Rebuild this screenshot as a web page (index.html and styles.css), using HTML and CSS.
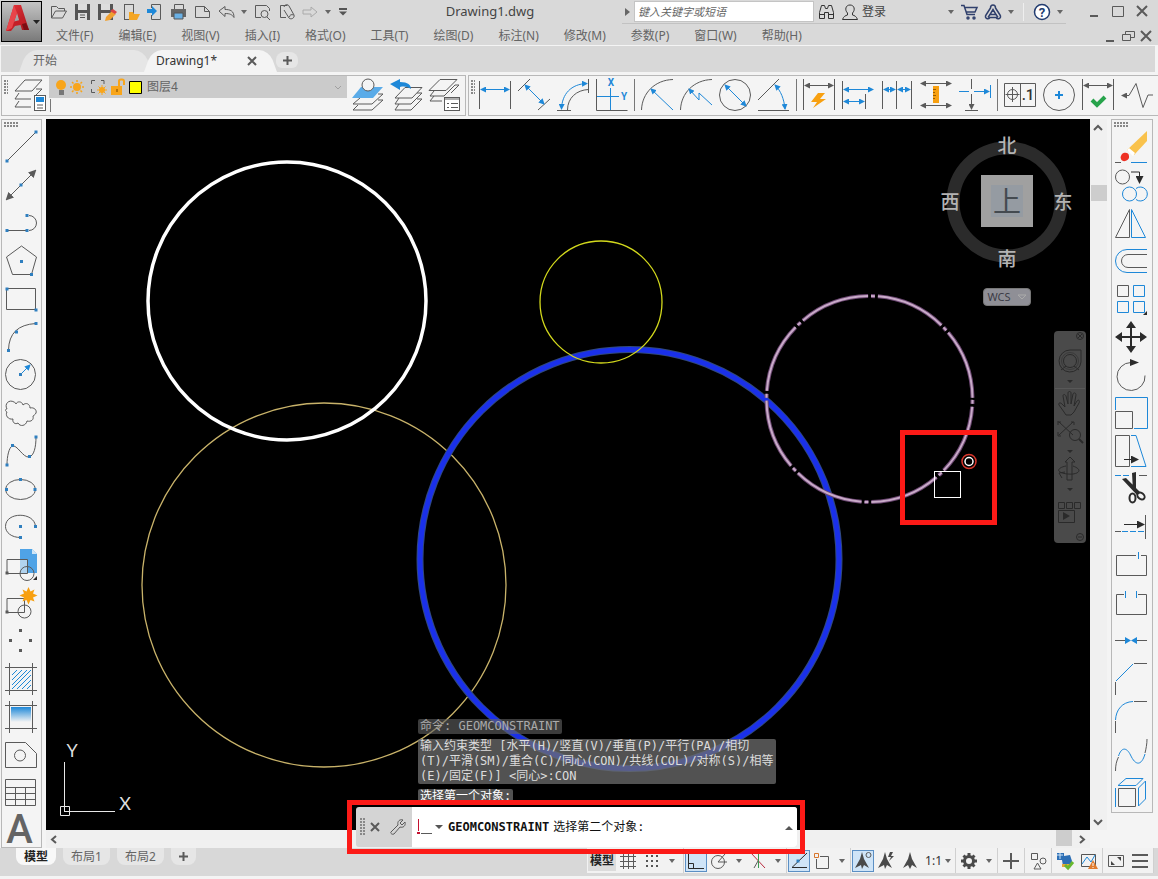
FILE: index.html
```html
<!DOCTYPE html>
<html lang="zh-CN">
	<head>
		<meta charset="utf-8">
		<title>Drawing1.dwg</title>
		<link rel="stylesheet" href="styles.css">
	</head>
	<body>
		<svg class="defs" aria-hidden="true">
			<defs>
				<marker id="ab" orient="auto-start-reverse" markerUnits="userSpaceOnUse" markerWidth="6" markerHeight="6" viewBox="0 0 6 6" refX="5" refY="3"><path d="M0 0l6 3-6 3z" fill="#1e88d8"/></marker>
				<marker id="ag" orient="auto-start-reverse" markerUnits="userSpaceOnUse" markerWidth="6" markerHeight="6" viewBox="0 0 6 6" refX="5" refY="3"><path d="M0 0l6 3-6 3z" fill="#5a5a5a"/></marker>
				<marker id="ak" orient="auto-start-reverse" markerUnits="userSpaceOnUse" markerWidth="8" markerHeight="8" viewBox="0 0 8 8" refX="6" refY="4"><path d="M0 0l8 4-8 4z" fill="#2b2b2b"/></marker>
				<marker id="al" orient="auto-start-reverse" markerUnits="userSpaceOnUse" markerWidth="8" markerHeight="8" viewBox="0 0 8 8" refX="6" refY="4"><path d="M0 0l8 4-8 4z" fill="#5a5a5a"/></marker>
				<linearGradient id="fade" x2="0" y2="1"><stop stop-color="#1e88d8"/><stop offset="1" stop-color="#f4f4f4"/></linearGradient>
				<linearGradient id="red" x2="1" y2="1"><stop stop-color="#e8373c"/><stop offset="1" stop-color="#a5121a"/></linearGradient>
			</defs>
		</svg>

		<header class="header">
			<button class="app-button" aria-label="应用程序菜单">
				<svg width="39" height="39" viewBox="0 0 39 39">
					<path d="M12 3h7l8 25h-7l-5-17-5 15-6 3z" fill="url(#red)"/>
					<path d="M4 29l6-9 12-3 2 5-11 2-4 5z" fill="#c41f27"/>
					<path d="M12 3l3 8-5 15-6 3z" fill="#e8454a"/>
					<path d="M20 22l4-1 3 7h-5z" fill="#7c0d13"/>
					<path d="M31 18h7l-3.500 4z" fill="#222"/>
				</svg>
			</button>
			<div class="header-rows">
				<div class="title-row">
					<div class="quick">
						<button aria-label="打开"><svg viewBox="0 0 24 24"><path class="g" d="M5.500 18V6.500h5l2 2h6V11M5.500 18l4-7h11l-4 7z"/></svg></button>
						<button aria-label="保存"><svg viewBox="0 0 24 24"><path d="M5 4h15v16H5z" fill="#555"/><path d="M8 4h9v6H8zM8 13h9v7H8z" fill="#ddd"/><path d="M10 15h5M10 17.500h5" stroke="#555"/></svg></button>
						<button aria-label="另存为"><svg viewBox="0 0 24 24"><path d="M4 4h15v16H4z" fill="#555"/><path d="M7 4h9v6H7zM7 13h9v7H7z" fill="#ddd"/><path d="M12 17l6-6 4 3-6 6-5 1z" fill="#f0a030"/><path d="M16 11l3-2 4 3-2 2z" fill="#d44"/></svg></button>
						<button aria-label="从移动设备打开"><svg viewBox="0 0 24 24"><rect class="g" x="6.500" y="4.500" width="9" height="15"/><path d="M11 20v-8h4l1 2h6l-3 6z" fill="#f5a623"/></svg></button>
						<button aria-label="保存到移动设备"><svg viewBox="0 0 24 24"><path class="g" d="M9.500 8V4.500h9v15h-9V15"/><path d="M5 9h5V6l5 5-5 5v-3H5z" fill="#1e88d8"/></svg></button>
						<button aria-label="打印"><svg viewBox="0 0 24 24"><path class="g" d="M8.500 9V4.500h9V9"/><path d="M5 9h15v8H5z" fill="#666"/><path d="M8 13h9v6H8z" fill="#6ab0e4" stroke="#555"/></svg></button>
						<button aria-label="新建"><svg viewBox="0 0 24 24"><path class="g" d="M5.500 6.500h9l5 5v6h-14zM14.500 6.500v5h5"/></svg></button>
						<button aria-label="放弃"><svg viewBox="0 0 24 24"><path class="g" d="M5 11l6-4.500v3c5 0 9 1 9 8-2-3-4-4-9-4v3z"/></svg></button>
						<button class="drop" aria-label="放弃列表"></button>
						<button aria-label="打印预览"><svg viewBox="0 0 24 24"><path class="g" d="M11 17.500H5.500v-12h11l3 3V11"/><circle class="g" cx="14.500" cy="14" r="3.500"/><path class="g" d="M17 17l3 3"/></svg></button>
						<button aria-label="图纸集"><svg viewBox="0 0 24 24"><path class="g" d="M12 17.500H6.500v-12h7M10 7c1-3 4-3 5-1l5 9c1 3-3 5-5 3l-5-8M15.500 17c0-2 2-3 4-2"/></svg></button>
						<button aria-label="重做"><svg viewBox="0 0 24 24"><path class="faint" d="M19 12l-6-5v3H5v4h8v3z"/></svg></button>
						<button class="drop" aria-label="重做列表"></button>
						<button aria-label="自定义"><svg viewBox="0 0 24 24"><path d="M5 8h8v2H5zM5 11.500h8l-4 4z" fill="#555"/></svg></button>
					</div>
					<h1 class="title">Drawing1.dwg</h1>
					<div class="search">
						<button class="expand" aria-label="展开"></button>
						<input type="text" aria-label="搜索" placeholder="键入关键字或短语">
						<button aria-label="搜索"><svg viewBox="0 0 24 24"><path class="dark" d="M5.500 18.500v-6l2-7h3l1 3h2l1-3h3l2 7v6h-5v-6h-4v6zM5.500 14.500h5M14.500 14.500h5"/></svg></button>
						<button class="login"><svg viewBox="0 0 24 24"><path class="dark" d="M4.500 19.500c1-3 3-4 5-4.500v-2c-3-3-2-8 2.500-8s5.500 5 2.500 8v2c2 .5 4 1.500 5 4.500z"/></svg>登录</button>
					</div>
					<div class="account">
						<button class="drop" aria-label="账户"></button>
						<button aria-label="购物车"><svg viewBox="0 0 24 24"><path class="navy" d="M4 5.500h3l3 9h8M8 7.500h12l-2 4.500H9"/><circle class="navy" cx="11" cy="18" r="1"/><circle class="navy" cx="17" cy="18" r="1"/></svg></button>
						<button aria-label="App Store"><svg viewBox="0 0 24 24"><path class="navy" d="M9.500 8c0-4 5-4 5 0l4.500 7c2 3-2 5-4 2.500H9c-2 2.500-6 .5-4-2.500zM9 14.500h6l-3-5zM9 14.500l-2 3M15 14.500l2 3"/></svg></button>
						<button class="drop" aria-label="App Store 列表"></button>
						<span class="divider"></span>
						<button aria-label="帮助"><svg viewBox="0 0 24 24"><circle cx="12" cy="12" r="7.500" fill="#fff" stroke="#223c70" stroke-width="1.500"/><text class="help-mark" x="12" y="17">?</text></svg></button>
						<button class="drop" aria-label="帮助列表"></button>
					</div>
					<div class="window-buttons">
						<button aria-label="最小化"><svg viewBox="0 0 24 24"><path class="thick" d="M8 16h8"/></svg></button>
						<button aria-label="最大化"><svg viewBox="0 0 24 24"><path class="g" d="M6.500 6.500h11v10h-11z"/></svg></button>
						<button aria-label="关闭"><svg viewBox="0 0 24 24"><path class="thick" d="M7 6l10 10M17 6L7 16"/></svg></button>
					</div>
				</div>
				<nav class="menu-row">
					<a href="#file">文件(F)</a>
					<a href="#edit">编辑(E)</a>
					<a href="#view">视图(V)</a>
					<a href="#insert">插入(I)</a>
					<a href="#format">格式(O)</a>
					<a href="#tools">工具(T)</a>
					<a href="#draw">绘图(D)</a>
					<a href="#dimension">标注(N)</a>
					<a href="#modify">修改(M)</a>
					<a href="#parametric">参数(P)</a>
					<a href="#window">窗口(W)</a>
					<a href="#help">帮助(H)</a>
					<div class="doc-buttons">
						<button aria-label="最小化图形"><svg viewBox="0 0 18 18"><path class="thick" d="M5 14h8"/></svg></button>
						<button aria-label="还原图形"><svg viewBox="0 0 18 18"><path class="g" d="M6.500 7V4.500h9v6H12M3.500 7.500h8v6h-8z"/></svg></button>
						<button aria-label="关闭图形"><svg viewBox="0 0 18 18"><path class="thick" d="M4 4l10 10M14 4L4 14"/></svg></button>
					</div>
				</nav>
			</div>
		</header>

		<div class="file-tabs">
			<button class="file-tab">开始</button>
			<button class="file-tab active">Drawing1*<svg width="10" height="10" viewBox="0 0 10 10"><path class="thick" d="M1 1l8 8M9 1L1 9"/></svg></button>
			<button class="file-tab add" aria-label="新图形"><svg width="9" height="9" viewBox="0 0 9 9"><path class="thick" d="M0 4.500h9M4.500 0v9"/></svg></button>
		</div>

		<div class="toolbars">
			<div class="toolbar layers">
				<span class="grip"></span>
				<button aria-label="图层特性"><svg viewBox="0 0 39 40"><path class="g" d="M16 4h17l-10 11H6zM27 13h6l-7 7M10 17l-4 6h16M10 25l-4 6h16"/><rect x="25.500" y="19.500" width="11" height="15" fill="#fff" stroke="#5a5a5a"/><path d="M27 21h8v5h-8z" fill="#1e88d8"/><path class="g" d="M28 29h6M28 32h6"/></svg></button>
				<div class="layer-area">
					<div class="layer-combo">
						<svg width="88" height="20" viewBox="0 0 88 20">
							<circle cx="7" cy="8" r="5" fill="#f8a51b"/><path d="M5 13h5v5H5z" fill="#777"/>
							<circle cx="23" cy="10" r="4" fill="#f8a51b"/><path d="M23 3v2M23 15v2M16 10h2M28 10h2M18 5l1.500 1.500M26.500 13.500L28 15M28 5l-1.500 1.500M19.500 13.500L18 15" stroke="#f8a51b" stroke-width="1.500"/>
							<path class="g" d="M41 3.500h-3.500V7M47 3.500h3V7M37.500 12v3.500H41"/><circle cx="48" cy="13" r="3" fill="#f8a51b"/><path d="M48 8v10M43 13h10M44.500 9.500l7 7M51.500 9.500l-7 7" stroke="#f8a51b"/>
							<path d="M57 9h11v9H57z" fill="#f8a51b"/><path d="M65 9V4q0-1.500 2-1.500h1q2 0 2 2V8" fill="none" stroke="#f8a51b" stroke-width="2"/><path d="M62 12h2v3h-2z" fill="#b87408"/>
							<path d="M75.500 4.500h12v12h-12z" fill="#ff0" stroke="#000"/>
						</svg>
						<select aria-label="图层"><option>图层4</option></select>
					</div>
				</div>
				<button aria-label="置为当前"><svg viewBox="0 0 39 40"><path class="g" d="M12 22l-7 6h19l11-10h-5M10 29l-5 5h19l11-10h-5"/><path d="M13 11h22L25 22H4z" fill="#5aabe8"/><circle cx="20" cy="9" r="6" fill="#f4f4f4" stroke="#5a5a5a"/></svg></button>
				<button aria-label="上一个图层"><svg viewBox="0 0 39 40"><path class="g" d="M18 11.500h17L25 22H8zM12 22l-4 6h16l11-11h-5M12 28l-4 6h16l11-11h-5"/><path d="M3 8l10-5v3c8 0 11 3 11 7-3-2-6-3-11-2v3z" fill="#1e88d8"/></svg></button>
				<button aria-label="图层状态管理器"><svg viewBox="0 0 39 40"><path class="g" d="M14 3.500h17L20 14.500H3zM8 15l-4 5h14l11-11h4l-8 8M8 20l-4 5h12"/><rect x="18.500" y="21.500" width="15" height="13" fill="#fff" stroke="#5a5a5a"/><path class="g" d="M18 23h16M25 27.500h7M25 31.500h7M21 27.500h2M21 31.500h2"/></svg></button>
			</div>
			<div class="toolbar dimension">
				<span class="grip"></span>
				<button aria-label="线性"><svg viewBox="0 0 39 40"><path class="g" d="M4.500 5v28M35.500 5v28"/><path class="b ends-b" d="M6 13.500h28"/></svg></button>
				<button aria-label="对齐"><svg viewBox="0 0 39 40"><path class="g" d="M4 15L16 3M24 34l12-11"/><path class="b ends-b" d="M11 9l19 19"/></svg></button>
				<button aria-label="弧长"><svg viewBox="0 0 39 40"><path class="g" d="M4 34.500h14M35.500 3v14M14.500 34c0-12 9-20 21-20.500"/><path class="b ends-b" d="M8.500 33C9 18 18 8 34 7.500"/></svg></button>
				<button aria-label="坐标"><svg viewBox="0 0 39 40"><path class="g" d="M4.500 3v31.500h31"/><path class="b" d="M18.500 12v22M5 20.500h22"/><text class="axis" x="19" y="10">X</text><text class="axis" x="32" y="24">Y</text></svg></button>
				<span class="separator"></span>
				<button aria-label="半径"><svg viewBox="0 0 39 40"><path class="g" d="M4.500 34C5 17 18 4 36 3.500"/><path class="b start-b" d="M14 13l22 21"/></svg></button>
				<button aria-label="折弯"><svg viewBox="0 0 39 40"><path class="g" d="M4.500 34C5 17 18 4 36 3.500"/><path class="b start-b" d="M13 13l10 11V17l13 12"/></svg></button>
				<button aria-label="直径"><svg viewBox="0 0 39 40"><circle class="g" cx="20" cy="19" r="15.500"/><path class="b ends-b" d="M10 9l21 21"/></svg></button>
				<button aria-label="角度"><svg viewBox="0 0 39 40"><path class="g" d="M4 24L25 3M4 34.500h31"/><path class="b ends-b" d="M21 9c6 6 9 14 10 24"/></svg></button>
				<span class="separator"></span>
				<button aria-label="快速标注"><svg viewBox="0 0 39 40"><path class="g" d="M4.500 3v31M35.500 3v31"/><path class="g ends-g" d="M6 9.500h28"/><path d="M19 17l-7 9h6l-4 6 13-9h-6l5-6z" fill="#f8a010"/></svg></button>
				<button aria-label="基线"><svg viewBox="0 0 39 40"><path class="g" d="M4.500 5v28M27.500 18v15"/><path class="b ends-b" d="M6 13.500h29"/><path class="b ends-b" d="M6 25.500h20"/></svg></button>
				<button aria-label="连续"><svg viewBox="0 0 39 40"><path class="g" d="M5.500 5v28M19.500 5v28M34.500 5v28"/><path class="b ends-b" d="M7 13.500h11"/><path class="b ends-b" d="M21 13.500h12"/></svg></button>
				<button aria-label="标注间距"><svg viewBox="0 0 39 40"><path class="g ends-g" d="M5 7.500h30"/><path class="g ends-g" d="M5 29.500h30"/><path d="M17 10h6v17h-6z" fill="#f8a010"/><path d="M17 13.500h3M17 16.500h2M17 19.500h3M17 22.500h2" stroke="#9a5d00"/></svg></button>
				<button aria-label="标注打断"><svg viewBox="0 0 39 40"><path class="g" d="M16.500 3v10M10 34.500h13"/><path class="g end-g" d="M16.500 18v15"/><path class="b" d="M4 15.500h10M35.500 9v13"/><path class="b end-b" d="M19 15.500h15"/></svg></button>
				<span class="separator"></span>
				<button aria-label="公差"><svg viewBox="0 0 39 40"><path class="g" d="M4.500 7.500h31v23h-31zM20.500 7.500v23M12.500 11v15M5.500 18.500h14"/><circle class="g" cx="12.500" cy="18.500" r="5"/><text class="tol" x="28" y="24">.1</text></svg></button>
				<button aria-label="圆心标记"><svg viewBox="0 0 39 40"><circle class="g" cx="20" cy="19" r="15.500"/><path d="M20 15v8M16 19h8" stroke="#1e88d8" stroke-width="2"/></svg></button>
				<button aria-label="检验"><svg viewBox="0 0 39 40"><path class="g" d="M4.500 3v31M35.500 3v31"/><path class="g ends-g" d="M6 9.500h28"/><path d="M14 24l5 5 8-8" fill="none" stroke="#27a34b" stroke-width="4"/></svg></button>
				<button aria-label="折弯线性"><svg viewBox="0 0 39 40"><path class="g start-g" d="M5 19.500h7l7-12 7 24 5-12.500h5"/></svg></button>
			</div>
		</div>

		<main class="workspace">
			<div class="toolbar side draw">
				<span class="grip"></span>
				<button aria-label="直线"><svg viewBox="0 0 38 38"><path class="g" d="M4 33L33 4"/><path class="dot" d="M4 33h0M33 4h0"/></svg></button>
				<button aria-label="构造线"><svg viewBox="0 0 38 38"><path class="g ends-l" d="M4 33L32 5"/><path class="dot" d="M18 19h0"/></svg></button>
				<button aria-label="多段线"><svg viewBox="0 0 38 38"><path class="g" d="M4 26.500h20M26 11.500a7.500 7.500 0 0 1 0 15"/><path class="dot" d="M4 26.500h0M24 26.500h0M24 11.500h0"/></svg></button>
				<button aria-label="多边形"><svg viewBox="0 0 38 38"><path class="g" d="M18.500 4l15 11-5 17.500h-19L3.500 15z"/><path class="dot" d="M18.500 19.500h0M28.500 32.500h0"/></svg></button>
				<button aria-label="矩形"><svg viewBox="0 0 38 38"><path class="g" d="M3.500 8.500h29v21h-29z"/><path class="dot" d="M4 9h0M33 30h0"/></svg></button>
				<button aria-label="圆弧"><svg viewBox="0 0 38 38"><path class="g" d="M5.500 32Q6 7 33 5.500"/><path class="dot" d="M5.500 32.500h0M13.500 14h0M33 5.500h0"/></svg></button>
				<button aria-label="圆"><svg viewBox="0 0 38 38"><circle class="g" cx="17.500" cy="18.500" r="15"/><path class="b end-b" d="M17.500 18.500L27 9"/><path class="dot" d="M17.500 18.500h0"/></svg></button>
				<button aria-label="修订云线"><svg viewBox="0 0 38 38"><path class="g" d="M4 15c-3-5 2-10 7-7 1 0 1 1 2 2 1-3 6-3 7 1 3-3 7-1 7 3 4-1 7 2 6 5-1 2-2 2-3 3 1 4-2 6-6 5-1 5-7 6-9 2-3 2-6-1-5-4-5 1-8-4-6-7-2-1-2-3 0-3z"/></svg></button>
				<button aria-label="样条曲线"><svg viewBox="0 0 38 38"><path class="g" d="M4 33c0-9 2-17 5-19 5-2 11 12 17 11 5-1 7-10 7-20"/><path class="dot" d="M4 33h0M9.500 13.500h0M26.500 24.500h0M33 5h0"/></svg></button>
				<button aria-label="椭圆"><svg viewBox="0 0 38 38"><ellipse class="g" cx="17.500" cy="19.500" rx="15" ry="10"/><path class="dot" d="M17.500 9.500h0M3.500 19.500h0M32 19.500h0"/></svg></button>
				<button aria-label="椭圆弧"><svg viewBox="0 0 38 38"><path class="g" d="M32.500 18.500c-1-15-30-15-30 0 0 6 6 11 15 11"/><path class="dot" d="M32.500 18.500h0M17.500 18.500h0M17.500 29.500h0"/></svg></button>
				<button aria-label="插入块"><svg viewBox="0 0 38 38"><path d="M17 3h12l5 5v19H17z" fill="#4fa3e6"/><path d="M29 3v5h5z" fill="#cfe5f7"/><path d="M4 13.500h20.500v14H4z" fill="#f4f4f4" fill-opacity=".6" stroke="#5a5a5a"/><circle class="g" cx="24" cy="27.500" r="7"/><path class="corner" d="M34 30v4h-4z"/><path class="dot gray" d="M4 27h0"/></svg></button>
				<button aria-label="创建块"><svg viewBox="0 0 38 38"><path class="g" d="M4 14.500h17.500v14H4z"/><circle class="g" cx="21.500" cy="27.500" r="6.500"/><path d="M25.500 3l2 4.500 4-2-1.500 4 4.500 2-4.500 2 1.500 4-4-1.500-2 4.500-2-4.500-4 1.500 1.500-4-4.500-2 4.500-2-1.500-4 4 2z" fill="#f8a010"/><path class="dot gray" d="M4 28h0"/></svg></button>
				<button aria-label="点"><svg viewBox="0 0 38 38"><path class="dot gray" d="M17.500 8.500h0M7.500 18.500h0M27.500 18.500h0M17.500 28.500h0"/></svg></button>
				<button aria-label="图案填充"><svg viewBox="0 0 38 38"><path class="g" d="M6.500 3v32M29.500 3v32M2 7.500h32M2 30.500h32"/><path class="b" d="M9 15l5-5M9 20l10-10M9 25l15-15M9 29l19-19M14 29l14-14M19 29l9-9M24 29l4-4"/></svg></button>
				<button aria-label="渐变色"><svg viewBox="0 0 38 38"><path class="g" d="M6.500 3v32M29.500 3v32M2 7.500h32M2 30.500h32"/><path d="M8 9h20v15H8z" fill="url(#fade)"/></svg></button>
				<button aria-label="面域"><svg viewBox="0 0 38 38"><path class="g" d="M2.500 6.500h20l11 11v14h-31z"/><circle class="g" cx="17" cy="19.500" r="5.500"/></svg></button>
				<button aria-label="表格"><svg viewBox="0 0 38 38"><path class="g" d="M2.500 5.500h30v26h-30zM2.500 13.500h30M2.500 19.500h30M2.500 25.500h30M12.500 13.500v18M22.500 13.500v18"/></svg></button>
				<button class="text-tool" aria-label="多行文字">A</button>
			</div>

			<div class="view">
				<div class="canvas">
					<svg class="drawing" width="1044" height="711" viewBox="0 0 1044 711">
						<circle cx="278" cy="466" r="182" fill="none" stroke="#c9b36a" stroke-width="1.300"/>
						<circle cx="583.500" cy="440" r="209.500" fill="none" stroke="#31497e" stroke-width="7"/>
						<circle cx="583.500" cy="440" r="209.500" fill="none" stroke="#1a30ea" stroke-width="5"/>
						<circle cx="555" cy="183" r="61" fill="none" stroke="#d2d81c" stroke-width="1.300"/>
						<circle cx="241" cy="182" r="139" fill="none" stroke="#fff" stroke-width="3.500"/>
						<circle class="phantom wide" cx="823.500" cy="280" r="103"/>
						<circle class="phantom" cx="823.500" cy="280" r="103"/>
						<rect x="856.500" y="313.500" width="92" height="90" fill="none" stroke="#fc1a17" stroke-width="5"/>
						<rect x="888.500" y="352.500" width="26" height="26" fill="none" stroke="#fff"/>
						<circle cx="923" cy="342.500" r="7" fill="none" stroke="#d8362c" stroke-width="1.500"/>
						<circle cx="923" cy="342.500" r="4" fill="none" stroke="#fff" stroke-width="1.500"/>
					</svg>
					<svg class="ucs" width="80" height="80" viewBox="0 0 80 80">
						<path d="M8.500 22v49.500M8 71.500h51M4.500 66.500h9v9h-9z" fill="none" stroke="#e8e8e8"/>
						<text x="16" y="17">Y</text>
						<text x="69" y="70">X</text>
					</svg>
					<div class="viewcube">
						<svg width="140" height="140" viewBox="0 0 140 140">
							<circle cx="70" cy="68" r="54" fill="none" stroke="#2b2b2b" stroke-width="13"/>
							<path d="M44 41h52v52H44z" fill="#a0a0a0"/>
							<path d="M54 51h32v32H54z" fill="#959ba2"/>
							<text class="cube-face" x="70" y="78">上</text>
							<text x="70" y="19">北</text>
							<text x="70" y="132">南</text>
							<text x="13" y="75">西</text>
							<text x="126" y="75">东</text>
						</svg>
						<button class="wcs">WCS<svg width="10" height="6" viewBox="0 0 10 6"><path d="M1 1h8L5 5z" fill="none" stroke="#aaa"/></svg></button>
					</div>
					<div class="navbar">
						<svg width="32" height="212" viewBox="0 0 32 212">
							<g fill="none" stroke="#2a2a2a">
								<circle cx="26" cy="5" r="3.500"/><path d="M24 3l4 4M28 3l-4 4"/>
								<path d="M16 19h11v12a11 11 0 1 1-11-12zM7 39l5-4M25 39l-5-4"/><circle cx="16" cy="30" r="6.500"/><circle cx="16" cy="30" r="8.500" stroke-width=".5"/>
								<path d="M10 81l-5-7c-1-2 1-3 3-1l3 3-2-11c0-2 2-2 3 0l2 8V62c0-2 3-2 3 0v11l2-10c1-2 3-1 3 1l-2 11 3-5c2-2 3 0 2 2l-5 9-3 3h-5z"/>
								<path d="M5 91l14 13M19 91L5 104M4 91h3M4 94v-4M17 91h3v3M4 101v4h3"/><circle cx="21" cy="104" r="5.500"/><path d="M25 108l4 4" stroke-width="2"/>
								<path d="M13 131v18h5v-18h3l-5-5-5 5z"/><path d="M12 135c-10 2-10 7 2 8 10 1 16-4 5-8M8 147l-3-5 6-1"/>
								<path d="M4.500 171.500h6v6h-6zM12.500 171.500h6v6h-6zM20.500 171.500h6v6h-6zM4.500 179.500h16v12h-16z"/>
								<circle cx="26" cy="206" r="3.500"/><path d="M24 206h4"/>
							</g>
							<path d="M13 49h6l-3 3zM13 119h6l-3 3zM13 157h6l-3 3zM9 181l7 4-7 4z" fill="#2a2a2a"/>
							<path d="M1 57.500h30" stroke="#585858"/>
						</svg>
					</div>
					<div class="command">
						<div class="history">
							<p class="old">命令: GEOMCONSTRAINT</p>
							<p>输入约束类型 [水平(H)/竖直(V)/垂直(P)/平行(PA)/相切<br>(T)/平滑(SM)/重合(C)/同心(CON)/共线(COL)/对称(S)/相等<br>(E)/固定(F)] &lt;同心&gt;:CON</p>
							<p class="last">选择第一个对象:</p>
						</div>
						<div class="highlight">
							<div class="command-line">
								<span class="grip"></span>
								<button aria-label="关闭命令行"><svg width="12" height="12" viewBox="0 0 12 12"><path class="thick" d="M2 2l8 8M10 2l-8 8"/></svg></button>
								<button aria-label="自定义命令行"><svg width="18" height="18" viewBox="0 0 18 18"><path class="g" d="M2 14l7-7c-1-4 2-6 5-5l-3 3 2 2 3-3c1 4-2 6-5 5l-6 7c-2 1-4-1-3-2z"/></svg></button>
								<div class="prompt">
									<svg width="26" height="18" viewBox="0 0 26 18"><path d="M1.500 1v12" stroke="#c41230"/><path d="M0 14h3v2H0z" fill="#c41230"/><path class="g" d="M4 15.500h11"/><path d="M18 7h8l-4 4z" fill="#555"/></svg>
									<label for="cmd"><b>GEOMCONSTRAINT</b>选择第二个对象:</label>
									<input id="cmd" type="text">
									<button aria-label="命令历史"><svg width="8" height="5" viewBox="0 0 8 5"><path d="M0 5l4-4 4 4z" fill="#555"/></svg></button>
								</div>
							</div>
						</div>
					</div>
				</div>
				<div class="scroll vertical">
					<button aria-label="向上"><svg width="16" height="16" viewBox="0 0 16 16"><path class="thick" d="M4 10l4-4 4 4"/></svg></button>
					<span class="thumb"></span>
					<button aria-label="向下"><svg width="16" height="16" viewBox="0 0 16 16"><path class="thick" d="M4 6l4 4 4-4"/></svg></button>
				</div>
				<div class="scroll horizontal">
					<button aria-label="向左"><svg width="16" height="16" viewBox="0 0 16 16"><path class="thick" d="M10 5L6 8.500l4 3.500"/></svg></button>
					<span class="thumb"></span>
					<button aria-label="向右"><svg width="16" height="16" viewBox="0 0 16 16"><path class="thick" d="M6 5l4 3.500L6 12"/></svg></button>
				</div>
			</div>

			<div class="toolbar side modify">
				<span class="grip"></span>
				<button aria-label="删除"><svg viewBox="0 0 40 38"><path d="M35 3v10L22 27l-7-5z" fill="#f9c24c"/><path d="M15 22l2-2 6 5-2 3z" fill="#fff"/><path d="M10 26c2-2 7-2 7 2 1 5-7 7-8 3-1-2 0-3 1-5z" fill="#ee3124"/><path class="g" d="M3 34.500h6"/><path class="b" d="M19 34.500h16"/></svg></button>
				<button aria-label="复制"><svg viewBox="0 0 40 38"><circle class="g" cx="10.500" cy="11" r="7"/><path class="k end-k" d="M19 6h8.500v10"/><circle class="b" cx="17.500" cy="28" r="7"/><path class="b" d="M24 22.500a7 7 0 1 1 0 11"/></svg></button>
				<button aria-label="镜像"><svg viewBox="0 0 40 38"><path class="g" d="M17.500 5.500v28h-14z"/><path class="b" d="M19.500 5.500v28h14z"/></svg></button>
				<button aria-label="偏移"><svg viewBox="0 0 40 38"><path class="b" d="M35 7.500H15a11.500 11.500 0 0 0 0 23h20"/><path class="g" d="M35 12.500H16a6.500 6.500 0 0 0 0 13h19"/></svg></button>
				<button aria-label="阵列"><svg viewBox="0 0 40 38"><path class="g" d="M5.500 5.500h11v11h-11z"/><path class="b" d="M21.500 5.500h11v11h-11zM5.500 21.500h11v11h-11zM21.500 21.500h11v11h-11z"/><path class="corner" d="M35 31v4h-4z"/></svg></button>
				<button aria-label="移动"><svg viewBox="0 0 40 38"><path d="M19 3l5 7h-4v8h8v-4l7 5-7 5v-4h-8v8h4l-5 7-5-7h4v-8h-8v4l-7-5 7-5v4h8v-8h-4z" fill="#2b2b2b"/></svg></button>
				<button aria-label="旋转"><svg viewBox="0 0 40 38"><path class="g" d="M33 19.500a14 14 0 1 1-14-13"/><path d="M18 3l9 3.500-9 3.500z" fill="#2b2b2b"/></svg></button>
				<button aria-label="缩放"><svg viewBox="0 0 40 38"><path class="b" d="M3.500 16V3.500h32v31H22"/><path class="g" d="M3.500 17.500h17v17h-17z"/></svg></button>
				<button aria-label="拉伸"><svg viewBox="0 0 40 38"><path class="g" d="M3.500 3.500h14v31h-14z"/><path class="b" d="M19 3.500h5l10 31H19"/><path class="k end-k" d="M12 27.500h13"/></svg></button>
				<button aria-label="修剪"><svg viewBox="0 0 40 38"><path class="b dash" d="M3 5.500h16"/><path class="g" d="M27 5.500h8"/><path d="M20 3l4-1v17l-3 2zM10 9l4-1 14 14-3 3z" fill="#2b2b2b"/><ellipse class="ring" cx="20.500" cy="28" rx="3" ry="4.500"/><ellipse class="ring" cx="29" cy="26" rx="4" ry="3" transform="rotate(40 29 26)"/></svg></button>
				<button aria-label="延伸"><svg viewBox="0 0 40 38"><path class="k end-k" d="M12 16.500h19"/><path class="g" d="M33.500 7v24M3 23.500h6"/><path class="b dash" d="M10 23.500h22"/></svg></button>
				<button aria-label="打断于点"><svg viewBox="0 0 40 38"><path class="g" d="M24 9.500H4.500v20h30v-20H29"/><path class="b" d="M26.500 6v7"/></svg></button>
				<button aria-label="打断"><svg viewBox="0 0 40 38"><path class="g" d="M12 10.500H4.500v20h30v-20H26"/><path class="b" d="M13.500 7v7M24.500 7v7"/></svg></button>
				<button aria-label="合并"><svg viewBox="0 0 40 38"><path class="g" d="M3 18.500h10M25 18.500h10"/><path d="M13 15l6 3.500-6 3.500zM25 15l-6 3.500 6 3.500z" fill="#1e88d8"/></svg></button>
				<button aria-label="倒角"><svg viewBox="0 0 40 38"><path class="b" d="M4 21L21 4"/><path class="g" d="M22 3.500h13M3.500 22v13"/></svg></button>
				<button aria-label="圆角"><svg viewBox="0 0 40 38"><path class="b" d="M3.500 22C4 12 10 4 21 3.500"/><path class="g" d="M22 3.500h13M3.500 23v12"/></svg></button>
				<button aria-label="光顺曲线"><svg viewBox="0 0 40 38"><path class="g" d="M3.500 35c0-6 1-10 3-14M33 17c1-4 2-9 2-14"/><path class="b" d="M6.500 20c3-9 8-9 12-1 5 11 11 11 14.500-1"/></svg></button>
				<button aria-label="分解"><svg viewBox="0 0 40 38"><path class="g" d="M6.500 14.500h17v18h-17z"/><path class="b" d="M3.500 14v19M6 11.500l8-7h17l-7 7zM26.500 14l7-7v18l-7 7z"/></svg></button>
			</div>
		</main>

		<footer class="status">
			<div class="layout-tabs">
				<button class="layout-tab active">模型</button>
				<button class="layout-tab">布局1</button>
				<button class="layout-tab">布局2</button>
				<button class="layout-tab" aria-label="新建布局"><svg width="9" height="9" viewBox="0 0 9 9"><path class="thick" d="M0 4.500h9M4.500 0v9"/></svg></button>
			</div>
			<div class="status-tools">
				<div class="group snap">
					<button class="model">模型</button>
					<button aria-label="栅格"><svg viewBox="0 0 24 24"><path class="g" d="M4 7.500h16M4 12.500h16M4 17.500h16M7.500 4v16M12.500 4v16M17.500 4v16"/></svg></button>
					<button aria-label="捕捉"><svg viewBox="0 0 24 24"><path d="M6 7h14M6 12h14M6 17h14" stroke="#555" stroke-width="2" stroke-dasharray="2 3"/></svg></button>
					<button class="drop" aria-label="捕捉设置"></button>
				</div>
				<div class="group">
					<button class="on" aria-label="正交"><svg viewBox="0 0 24 24"><path class="k" d="M4.500 4v15.500H20M4.500 14.500h5v5"/></svg></button>
					<button aria-label="极轴"><svg viewBox="0 0 24 24"><circle class="g" cx="11" cy="13" r="6.500"/><path class="g" d="M20 13h-9l7-8"/></svg></button>
					<button class="drop" aria-label="极轴设置"></button>
					<button aria-label="等轴测草图"><svg viewBox="0 0 24 24"><path d="M5 4l14 15" stroke="#b8283c"/><path d="M12.500 5v14" stroke="#3a9a50"/><path class="g" d="M8 19l4-7"/></svg></button>
					<button class="drop" aria-label="等轴测设置"></button>
				</div>
				<div class="group">
					<button class="on" aria-label="对象捕捉追踪"><svg viewBox="0 0 24 24"><path class="k" d="M20 4L5 18.500h15"/><path class="dot" d="M11 12h0"/></svg></button>
					<button aria-label="对象捕捉"><svg viewBox="0 0 24 24"><path class="g" d="M10 7.500h8.500v12h-12V10"/><path d="M4.500 4.500h4v4h-4z" fill="none" stroke="#d8762c"/></svg></button>
					<button class="drop" aria-label="对象捕捉设置"></button>
				</div>
				<div class="group">
					<button class="on" aria-label="注释可见性"><svg viewBox="0 0 24 24"><path class="person" d="M11 3l2 7 5 9-5-3-2 4-1-4-6 3 5-9z"/><circle class="g" cx="17.500" cy="6" r="2.500"/></svg></button>
					<button aria-label="自动缩放"><svg viewBox="0 0 24 24"><path class="person" d="M11 3l2 7 5 9-5-3-2 4-1-4-6 3 5-9zM16 3l-2 5h3l-2 4 5-5h-3l2-4z"/></svg></button>
					<button aria-label="注释比例"><svg viewBox="0 0 24 24"><path class="person" d="M12 3l2 7 5 9-5-3-2 4-2-4-5 3 5-9z"/></svg></button>
					<button class="scale">1:1<span class="caret"></span></button>
				</div>
				<div class="group">
					<button aria-label="切换工作空间"><svg viewBox="0 0 24 24"><circle cx="12" cy="12" r="4.500" fill="none" stroke="#4a4a4a" stroke-width="3"/><path d="M12 4v4M12 16v4M4 12h4M16 12h4M6.500 6.500L9 9M15 15l2.500 2.500M17.500 6.500L15 9M9 15l-2.500 2.500" stroke="#4a4a4a" stroke-width="3"/></svg></button>
					<button class="drop" aria-label="工作空间列表"></button>
				</div>
				<div class="group">
					<button aria-label="注释监视器"><svg viewBox="0 0 24 24"><path class="thick" d="M4 12h16M12 4v16"/></svg></button>
				</div>
				<div class="group">
					<button aria-label="隔离对象"><svg viewBox="0 0 24 24"><path class="g" d="M5.500 4.500h6v6h-6zM11.500 14l3.500 6H8z"/><circle class="g" cx="17" cy="12" r="3"/></svg></button>
				</div>
				<div class="group">
					<button aria-label="图形性能"><svg viewBox="0 0 24 24"><path d="M4 4h7v3l6-1 2 6-2 7-7-2-1-6H4z" fill="#2d6fb5"/><path d="M4 6h6M7 4v6" stroke="#cfe5f7"/><path d="M9 15h8v3H9z" fill="#e5a83c"/><path d="M12 16l3 3 5-6" fill="none" stroke="#69b82e" stroke-width="3"/></svg></button>
					<button aria-label="清理屏幕"><svg viewBox="0 0 24 24"><path d="M4.500 5.500h14v12h-14z" fill="none" stroke="#555"/><path d="M5 15l5-7 4 5 4-7" fill="none" stroke="#1e88d8"/><path d="M16 11l5 9H11z" fill="#e07b2e"/><path d="M16 14v3M16 18v1" stroke="#fff"/></svg></button>
				</div>
				<div class="group">
					<button aria-label="全屏显示"><svg viewBox="0 0 24 24"><path class="g" d="M4.500 6.500h15v11h-15z"/><path d="M17 8v4l-4-4zM7 16v-4l4 4z" fill="#444"/></svg></button>
					<button aria-label="自定义"><svg viewBox="0 0 24 24"><path class="thick" d="M4 6h16M4 12h16M4 18h16"/></svg></button>
				</div>
			</div>
		</footer>
	</body>
</html>
```

FILE: styles.css
```css
* {
	box-sizing: border-box;
}
body {
	margin: 0;
	min-width: 1158px;
	min-height: 100vh;
	display: flex;
	flex-direction: column;
	background: #f4f4f4;
	color: #646464;
	font-family: "Noto Sans", "Noto Sans CJK SC", sans-serif;
	font-size: 12px;
	line-height: 16px;
	overflow-x: hidden;
}
button {
	display: flex;
	align-items: center;
	justify-content: center;
	flex: none;
	margin: 0;
	padding: 0;
	border: 0;
	background: transparent;
	color: inherit;
	font: inherit;
	cursor: pointer;
}
input,
select {
	font: inherit;
	color: inherit;
	border: 0;
	outline: 0;
}
svg {
	display: block;
	flex: none;
}
.defs {
	position: absolute;
	width: 0;
	height: 0;
}

/* icon strokes */
.g, .b, .k, .dark, .navy, .faint, .thick, .ring {
	fill: none;
	stroke: #5a5a5a;
}
.b { stroke: #1e88d8; }
.k { stroke: #2b2b2b; }
.dark { stroke: #333; }
.navy { stroke: #30406c; stroke-width: 1.5; }
.faint { stroke: #aaa; }
.thick { stroke-width: 2; }
.ring { stroke: #2b2b2b; stroke-width: 2; }
.dash { stroke-dasharray: 6 2; }
.dot {
	stroke: #2f7fbf;
	stroke-width: 3;
	stroke-linecap: square;
}
.dot.gray { stroke: #5a5a5a; }
.corner { fill: #2b2b2b; }
.person { fill: #4a4a4a; }
.ends-b { marker-start: url(#ab); marker-end: url(#ab); }
.start-b { marker-start: url(#ab); }
.end-b { marker-end: url(#ab); }
.ends-g { marker-start: url(#ag); marker-end: url(#ag); }
.start-g { marker-start: url(#ag); }
.end-g { marker-end: url(#ag); }
.ends-l { marker-start: url(#al); marker-end: url(#al); }
.end-k { marker-end: url(#ak); }
.axis, .tol, .help-mark {
	text-anchor: middle;
	font-family: Roboto, sans-serif;
	font-weight: 700;
	font-size: 10px;
	fill: #1e88d8;
}
.tol { font-size: 15px; font-weight: 500; fill: #333; }
.help-mark { font-size: 13px; fill: #223c70; }

/* title and menu */
.header {
	display: flex;
	height: 45px;
	background: #d9d9d9;
}
.app-button {
	width: 41px;
	height: 41px;
	margin: 1px 4px 0 1px;
	border: 1px solid #000;
	background: linear-gradient(#c4c4c4, #7a7a7a);
}
.header-rows {
	flex: 1;
}
.title-row {
	display: flex;
	height: 24px;
}
.title-row button svg {
	width: 24px;
	height: 24px;
}
.quick,
.search,
.account,
.window-buttons {
	display: flex;
	align-items: center;
}
.drop {
	width: 12px;
	height: 24px;
}
.drop::before,
.caret {
	content: "";
	border: 3px solid transparent;
	border-top: 4px solid #666;
	border-bottom: 0;
}
.title {
	flex: 1;
	margin: 0;
	text-align: center;
	font-size: 12px;
	font-weight: 400;
	font-size: 13px;
	line-height: 22px;
	color: #444;
}
.search,
.account {
	border-bottom: 1px solid #c2c2c2;
}
.search .expand {
	width: 12px;
	height: 20px;
}
.expand::before {
	content: "";
	border: 4px solid transparent;
	border-left: 5px solid #666;
	border-right: 0;
}
.search input {
	width: 180px;
	height: 21px;
	padding: 0 3px;
	border: 1px solid #c4c4c4;
	background: #fff;
}
.search input::placeholder {
	color: #666;
	font-style: italic;
	font-size: 11px;
}
.login {
	padding-right: 59px;
	color: #444;
}
.divider {
	width: 1px;
	height: 18px;
	margin: 0 6px;
	background: #eee;
}
.window-buttons {
	padding: 0 4px 0 16px;
}
.menu-row {
	display: flex;
	align-items: center;
	gap: 25px;
	height: 21px;
	padding: 2px 0 0 10px;
}
.menu-row a {
	color: inherit;
	text-decoration: none;
	line-height: 20px;
}
.doc-buttons {
	display: flex;
	margin-left: auto;
	padding-right: 3px;
}
.doc-buttons svg {
	width: 18px;
	height: 18px;
}

/* file tabs */
.file-tabs {
	display: flex;
	height: 26px;
	margin-top: 1px;
	margin-right: 3px;
	margin-left: 1px;
	padding: 4px 0 0 22px;
	background: #d8d8d8;
}
.file-tab {
	position: relative;
	z-index: 0;
	width: 125px;
	justify-content: space-between;
	padding: 0 16px 0 10px;
}
.file-tab::before,
.file-tab::after {
	content: "";
	position: absolute;
	z-index: -1;
	inset: 0 50% 0 0;
	background: #e6e6e6;
	border-top-left-radius: 10px;
	transform: skewX(-20deg);
}
.file-tab::after {
	inset: 0 0 0 40%;
	border-radius: 0 10px 0 0;
	transform: skewX(20deg);
}
.file-tab.active {
	color: #333;
	padding-left: 8px;
}
.file-tab.active::before,
.file-tab.active::after {
	background: #f4f4f4;
}
.file-tab.add {
	width: 22px;
	height: 16px;
	margin: 2px 0 0 3px;
	padding: 0;
	justify-content: center;
	border-radius: 8px 8px 6px 6px;
	background: #e6e6e6;
}
.file-tab.add::before,
.file-tab.add::after {
	content: none;
}

/* toolbars */
.toolbars {
	display: flex;
	gap: 2px;
	margin: 3px 0 3px 1px;
}
.toolbar {
	display: flex;
	border: 1px solid #b8b8b8;
}
.toolbars button {
	width: 39px;
	height: 39px;
	align-items: flex-start;
}
.toolbars button svg {
	width: 39px;
	height: 40px;
}
.grip {
	width: 6px;
	height: 14px;
	background: radial-gradient(circle at 1px 1px, #888 1px, transparent 1px) 0 0 / 3px 3px;
}
.toolbars .grip {
	width: 4px;
	margin: 4px 1px 0 2px;
}
.dimension .grip {
	margin-right: 0;
}
.layer-area {
	width: 298px;
	margin: 0 1px;
}
.layer-combo {
	display: flex;
	align-items: center;
	height: 22px;
	padding: 0 5px;
	background: #cbcbcb;
}
.layer-combo select {
	flex: 1;
	appearance: none;
	padding: 0 0 0 5px;
	background: url("data:image/svg+xml,%3Csvg xmlns='http://www.w3.org/2000/svg' width='8' height='5'%3E%3Cpath d='M1 1l3 3 3-3' fill='none' stroke='%23a0a0a0'/%3E%3C/svg%3E") right center no-repeat;
}
.layer-area::after {
	content: "";
	display: block;
	width: 1px;
	height: 13px;
	margin: 1px 0 0 1px;
	background: #777;
}
.dimension {
	flex: 1;
	border-right: 0;
}
.separator {
	width: 6px;
	height: 32px;
	margin-top: 3px;
	background: linear-gradient(#777, #777) 3px 0 / 1px 100% no-repeat;
}
.side {
	flex-direction: column;
	align-self: flex-start;
}
.side .grip {
	width: 14px;
	height: 5px;
	margin: 2px 2px 1px;
}
.side button {
	height: 38px;
}
.draw {
	width: 41px;
	margin: 0 4px 0 1px;
}
.draw svg {
	width: 38px;
	height: 38px;
}
.side .text-tool {
	height: 35px;
	padding-right: 4px;
	font: 500 40px/35px Roboto, sans-serif;
}
.modify {
	width: 42px;
	margin: 0 5px 0 4px;
}
.modify svg {
	width: 40px;
	height: 38px;
}

/* drawing area */
.workspace {
	display: flex;
	flex: 1;
}
.view {
	flex: 1;
	display: grid;
	grid-template-columns: 1fr 17px;
	grid-template-rows: 1fr 18px;
}
.canvas {
	position: relative;
	z-index: 1;
	background: #000;
}
.drawing {
	position: absolute;
	top: 0;
	left: 0;
}
.phantom {
	fill: none;
	stroke: #c8aac8;
	stroke-width: 2;
	stroke-dasharray: 70.900 3 4 3;
	stroke-dashoffset: 73;
}
.phantom.wide {
	stroke: #6c4872;
	stroke-width: 4;
}
.ucs {
	position: absolute;
	left: 10px;
	bottom: 10px;
}
.ucs text {
	fill: #ddd;
	text-anchor: middle;
	font-family: Lato, sans-serif;
	font-size: 18px;
}
.viewcube {
	position: absolute;
	top: 15px;
	right: 13px;
	display: flex;
	flex-direction: column;
	align-items: center;
	gap: 14px;
}
.viewcube text {
	fill: #b4b4b4;
	text-anchor: middle;
	font-size: 19px;
	font-weight: 500;
}
.viewcube .cube-face {
	fill: #444a50;
	font-size: 28px;
	font-weight: 400;
}
.wcs {
	width: 48px;
	height: 18px;
	gap: 6px;
	border-radius: 4px;
	border: 1px solid #777;
	background: #8f8f96;
	color: #3c3c46;
	font-size: 11px;
}
.navbar {
	position: absolute;
	top: 212px;
	right: 4px;
	border-radius: 4px;
	background: #4a4a4a;
}
.command {
	position: absolute;
	left: 301px;
	bottom: -24px;
	width: 458px;
	font-family: "DejaVu Sans Mono", "Noto Sans CJK SC", monospace;
	font-size: 12px;
	line-height: 15px;
}
.history {
	display: flex;
	flex-direction: column;
	align-items: flex-start;
	gap: 5px;
	padding-left: 71px;
}
.history p {
	margin: 0;
	padding: 0 2px;
	border-radius: 2px;
	background: rgba(110, 110, 110, 0.75);
	color: #dcdcdc;
	white-space: nowrap;
}
.history .old {
	background: rgba(100, 100, 100, 0.6);
	color: #aaa;
}
.history .last {
	margin-bottom: -4px;
	color: #fff;
}
.highlight {
	position: relative;
	padding: 2px 3px 2px 4px;
	border: 5px solid #fc1a17;
}
.command-line {
	display: flex;
	align-items: stretch;
	height: 40px;
	border-radius: 3px;
	overflow: hidden;
	background: #d4d4d4;
}
.command-line .grip {
	height: 18px;
	margin: 11px 0 0 4px;
}
.command-line > button {
	width: 18px;
}
.command-line > button + button {
	width: 28px;
}
.prompt {
	flex: 1;
	display: flex;
	align-items: center;
	padding: 0 4px 0 5px;
	background: #fff;
	color: #111;
}
.prompt label {
	padding-left: 5px;
}
.prompt b {
	margin-right: 4px;
}
.prompt input {
	flex: 1;
	min-width: 0;
}
.scroll {
	display: flex;
	background: #f0f0f0;
}
.scroll button {
	width: 16px;
	height: 17px;
}
.scroll .thumb {
	width: 16px;
	height: 16px;
	background: #cdcdcd;
}
.vertical {
	flex-direction: column;
	justify-content: space-between;
}
.vertical .thumb {
	margin: 49px 0 auto 1px;
}
.horizontal .thumb {
	margin: 0 2px 0 auto;
}

/* status bar */
.status {
	display: flex;
	justify-content: space-between;
	height: 28px;
	margin-bottom: 3px;
	padding-right: 4px;
	background: #d8d8d8;
}
.layout-tabs {
	display: flex;
	gap: 7px;
	padding-left: 16px;
}
.layout-tab {
	min-width: 22px;
	height: 17px;
	padding: 0 8px;
	border-radius: 0 0 8px 8px;
	background: #e6e6e6;
}
.layout-tab.active {
	background: #f8f8f8;
	color: #222;
	font-weight: 700;
}
.status-tools {
	display: flex;
	margin-bottom: 3px;
	background: #f2f2f2;
}
.group {
	display: flex;
	align-items: center;
	padding: 0 1px;
	border-right: 1px solid #d0d0d0;
}
.group.snap {
	padding-right: 4px;
}
.group svg {
	width: 24px;
	height: 24px;
}
.group .drop {
	width: 15px;
}
.group .on {
	width: 22px;
	height: 22px;
	border: 1px solid #5b8fc4;
	background: #cfe4f7;
}
.group .model {
	height: 20px;
	padding: 0 2px;
	background: #dcdcdc;
	color: #222;
	font-weight: 700;
}
.group .scale {
	gap: 3px;
	padding: 0 3px;
	color: #333;
}
```
